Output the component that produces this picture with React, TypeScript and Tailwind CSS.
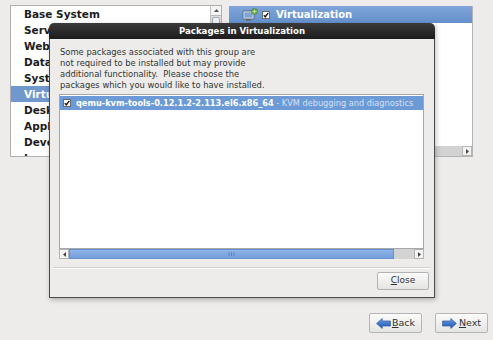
import React from "react";

const items = [
  "Base System",
  "Servers",
  "Web Services",
  "Databases",
  "System Management",
  "Virtualization",
  "Desktops",
  "Applications",
  "Development",
  "Languages",
];

function Check({ size = 8 }: { size?: number }) {
  return (
    <svg width={size} height={size} viewBox="0 0 8 8" className="shrink-0">
      <rect x="0.5" y="0.5" width="7" height="7" fill="#ffffff" stroke="#6b6b6b" strokeWidth="1" />
      <path d="M1.8 4.2 L3.3 5.8 L6.3 1.9" fill="none" stroke="#1e1e1e" strokeWidth="1.4" />
    </svg>
  );
}

function Arrow({ dir }: { dir: "left" | "right" }) {
  const d =
    dir === "left"
      ? "M0.6 5.5 L6.2 0.6 L6.2 3 L14.4 3 L14.4 8 L6.2 8 L6.2 10.4 Z"
      : "M14.4 5.5 L8.8 0.6 L8.8 3 L0.6 3 L0.6 8 L8.8 8 L8.8 10.4 Z";
  const id = dir === "left" ? "ga" : "gb";
  return (
    <svg width="15" height="11" viewBox="0 0 15 11" className="shrink-0">
      <defs>
        <linearGradient id={id} x1="0" y1="0" x2="0" y2="1">
          <stop offset="0" stopColor="#7aa6e3" />
          <stop offset="0.5" stopColor="#3f78cc" />
          <stop offset="1" stopColor="#2a5cae" />
        </linearGradient>
      </defs>
      <path d={d} fill={`url(#${id})`} stroke="#2a56a0" strokeWidth="0.7" />
    </svg>
  );
}

function VirtIcon() {
  return (
    <svg width="16" height="13" viewBox="0 0 16 13" className="shrink-0">
      <rect x="1" y="3" width="11" height="8" rx="1" fill="#e6ebf1" stroke="#4d5966" strokeWidth="0.8" />
      <rect x="2.3" y="4.3" width="8.4" height="5.4" fill="#7fa4d6" />
      <rect x="4" y="11" width="5" height="1.5" fill="#59636e" />
      <circle cx="12.5" cy="3.5" r="3" fill="#6fb34a" stroke="#3d7a25" strokeWidth="0.6" />
      <path d="M10.5 3.5 H14.5 M12.5 1.5 V5.5" stroke="#dff0d0" strokeWidth="0.6" />
    </svg>
  );
}

export default function App() {
  return (
    <div className="relative w-[493px] h-[340px] overflow-hidden bg-[#edecea] font-['DejaVu_Sans',sans-serif] text-[#2e3436] flex flex-col pt-[5px] pl-[10px] pr-[5px] pb-[7px]">
      {/* top row */}
      <div className="flex items-start gap-[7px]">
        {/* left group list */}
        <div className="w-[212px] h-[152px] border border-[#b0b0b0] bg-white flex">
          <div className="flex-1 overflow-hidden">
            {items.map((it) => (
              <div
                key={it}
                className={
                  "h-[16px] leading-[16px] pl-[13px] text-[10.5px] font-bold whitespace-nowrap " +
                  (it === "Virtualization" ? "bg-[#7098cf] text-white" : "text-[#1c1c1c]")
                }
              >
                {it}
              </div>
            ))}
          </div>
          <div className="w-[11px] border-l border-[#c4c4c4] bg-[#dcdcdc] flex flex-col">
            <div className="h-[10px] bg-[#f4f4f4] border-b border-[#b8b8b8] flex items-center justify-center">
              <svg width="5" height="3" viewBox="0 0 5 3">
                <path d="M0 3 L2.5 0 L5 3 Z" fill="#555" />
              </svg>
            </div>
            <div className="h-[50px] mx-px mt-px rounded-[2px] bg-[#eef0f3] border border-[#a6adb6]" />
          </div>
        </div>

        {/* right details panel */}
        <div className="w-[244px] h-[151px] mt-px flex flex-col border-r border-b border-[#b4b4b4] bg-white">
          <div className="h-[17px] bg-gradient-to-b from-[#7fa5da] to-[#6590cb] flex items-center pl-[13px] gap-[4px] text-white">
            <VirtIcon />
            <Check />
            <span className="ml-[2px] text-[10px] font-bold leading-none">Virtualization</span>
          </div>
          <div className="flex-1" />
          <div className="h-[10px] bg-[#d2d2d2] flex justify-end">
            <div className="w-[10px] h-full bg-[#f3f3f3] border border-[#b5b5b5] flex items-center justify-center">
              <svg width="3" height="5" viewBox="0 0 3 5">
                <path d="M0 0 L3 2.5 L0 5 Z" fill="#444" />
              </svg>
            </div>
          </div>
        </div>
      </div>

      {/* bottom navigation */}
      <div className="mt-auto flex justify-end gap-[13px]">
        <button className="w-[53px] h-[20px] rounded-[2px] border border-[#b5b5b5] bg-gradient-to-b from-[#fbfbfb] to-[#e4e4e2] flex items-center justify-center gap-[1px] text-[9.5px] text-[#2e3436]">
          <Arrow dir="left" />
          <span>
            <span className="underline underline-offset-1">B</span>ack
          </span>
        </button>
        <button className="w-[53px] h-[20px] rounded-[2px] border border-[#b5b5b5] bg-gradient-to-b from-[#fbfbfb] to-[#e4e4e2] flex items-center justify-center gap-[2px] text-[9.5px] text-[#2e3436]">
          <Arrow dir="right" />
          <span>
            <span className="underline underline-offset-1">N</span>ext
          </span>
        </button>
      </div>

      {/* modal dialog */}
      <div className="absolute left-[49px] top-[23px] w-[386px] h-[275px] flex flex-col shadow-[1px_2px_5px_rgba(0,0,0,0.25)]">
        <div className="h-[16px] rounded-t-[5px] bg-gradient-to-b from-[#3b3b3b] to-[#1c1c1c] flex items-center justify-center">
          <span className="text-white font-bold text-[8.6px] leading-none">Packages in Virtualization</span>
        </div>
        <div className="flex-1 bg-[#edecea] border-x border-b border-[#4a4a4a] flex flex-col">
          <p className="mt-[8px] ml-[10px] text-[8.4px] leading-[11px] text-[#2e3436]">
            Some packages associated with this group are
            <br />
            not required to be installed but may provide
            <br />
            additional functionality.&nbsp; Please choose the
            <br />
            packages which you would like to have installed.
          </p>
          <div className="mt-[3px] ml-[9px] mr-[10px] h-[155px] border border-[#a7a7a7] bg-white pt-px">
            <div className="h-[14px] bg-[#6c9ad6] flex items-center pl-[3px] gap-[5px] whitespace-nowrap overflow-hidden">
              <Check />
              <span className="text-[8.2px] leading-none">
                <span className="font-bold text-white">qemu-kvm-tools-0.12.1.2-2.113.el6.x86_64</span>
                <span className="text-[#d3e1f5]"> - KVM debugging and diagnostics</span>
              </span>
            </div>
          </div>
          <div className="ml-[9px] mr-[10px] h-[10px] flex bg-[#d3d3d3]">
            <div className="w-[10px] h-full bg-[#f4f4f4] border border-[#b3b3b3] flex items-center justify-center">
              <svg width="3" height="5" viewBox="0 0 3 5">
                <path d="M3 0 L0 2.5 L3 5 Z" fill="#444" />
              </svg>
            </div>
            <div className="w-[325px] h-full bg-gradient-to-b from-[#8fb5e8] to-[#729ed9] border border-[#6591cf] flex items-center justify-center">
              <svg width="7" height="4" viewBox="0 0 7 4">
                <path d="M1 0 V4 M3.5 0 V4 M6 0 V4" stroke="#4f7bbd" strokeWidth="0.8" />
              </svg>
            </div>
            <div className="flex-1" />
            <div className="w-[10px] h-full bg-[#f4f4f4] border border-[#b3b3b3] flex items-center justify-center">
              <svg width="3" height="5" viewBox="0 0 3 5">
                <path d="M0 0 L3 2.5 L0 5 Z" fill="#444" />
              </svg>
            </div>
          </div>
          <div className="mt-[8px] mx-[3px] h-[2px] border-t border-[#d4d3d1] border-b border-b-white" />
          <div className="mt-[3px] mr-[5px] self-end">
            <button className="w-[52px] h-[18px] rounded-[2px] border border-[#b3b3b3] bg-gradient-to-b from-[#fbfbfb] to-[#e4e4e2] text-[9px] text-[#2e3436] flex items-center justify-center">
              <span>
                <span className="underline underline-offset-1">C</span>lose
              </span>
            </button>
          </div>
        </div>
      </div>
    </div>
  );
}
